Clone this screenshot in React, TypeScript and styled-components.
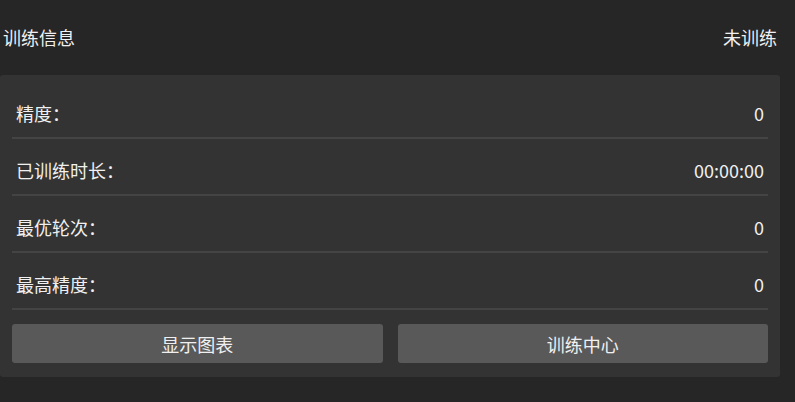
import React from "react";
import styled, { createGlobalStyle } from "styled-components";

const GlobalStyle = createGlobalStyle`
  html, body {
    margin: 0;
    padding: 0;
    background: #262626;
  }
  body {
    font-family: "Noto Sans CJK SC", "Noto Sans", sans-serif;
    color: #f0f0f0;
  }
`;

const stats = [
    { label: "精度：", value: "0" },
    { label: "已训练时长：", value: "00:00:00" },
    { label: "最优轮次：", value: "0" },
    { label: "最高精度：", value: "0" },
];

export default function App() {
    return (
        <>
            <GlobalStyle />
            <Panel>
                <Header>
                    <Title>训练信息</Title>
                    <Status>未训练</Status>
                </Header>

                <Card>
                    {stats.map((s) => (
                        <StatRow key={s.label}>
                            <Label>{s.label}</Label>
                            <Value>{s.value}</Value>
                        </StatRow>
                    ))}

                    <Actions>
                        <ActionButton>显示图表</ActionButton>
                        <ActionButton>训练中心</ActionButton>
                    </Actions>
                </Card>
            </Panel>
        </>
    );
}

const Panel = styled.div`
  width: 780px;
  display: flex;
  flex-direction: column;
`;

const Header = styled.div`
  height: 75px;
  display: flex;
  align-items: center;
  justify-content: space-between;
  padding: 0 3px 2px;
  box-sizing: border-box;
`;

const Title = styled.span`
  font-size: 18px;
  line-height: 22px;
`;

const Status = styled(Title)``;

const Card = styled.div`
  background: #333333;
  border-radius: 3px;
  padding: 7px 12px 14px;
  display: flex;
  flex-direction: column;
`;

const StatRow = styled.div`
  display: flex;
  justify-content: space-between;
  align-items: center;
  padding: 20px 4px 13px;
  line-height: 22px;
  font-size: 18px;
  border-bottom: 2px solid #444444;
`;

const Label = styled.span``;

const Value = styled.span``;

const Actions = styled.div`
  display: grid;
  grid-template-columns: 1fr 1fr;
  gap: 15px;
  margin-top: 14px;
`;

const ActionButton = styled.button`
  height: 39px;
  border: none;
  border-radius: 3px;
  background: #595959;
  color: #f0f0f0;
  font-family: inherit;
  font-size: 18px;
  cursor: pointer;
`;
